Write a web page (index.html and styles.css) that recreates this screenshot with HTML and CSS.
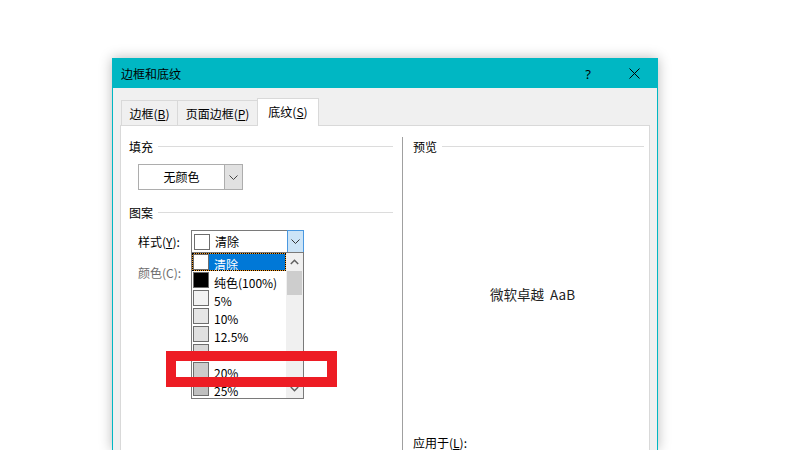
FILE: index.html
```html
<!DOCTYPE html>
<html lang="zh-CN">
<head>
<meta charset="utf-8">
<title>边框和底纹</title>
<link rel="stylesheet" href="styles.css">
</head>
<body>
<div class="desk">
  <div class="window">
    <div class="titlebar">
      <span class="title">边框和底纹</span>
      <span class="tbtn help">?</span>
      <span class="tbtn close">
        <svg width="11" height="11" viewBox="0 0 11 11"><path d="M0.5 0.5 L10.5 10.5 M10.5 0.5 L0.5 10.5" stroke="#000" stroke-width="1" fill="none"/></svg>
      </span>
    </div>
    <div class="body">
      <div class="tabs">
        <div class="tab t1">边框(<u>B</u>)</div>
        <div class="tab t2">页面边框(<u>P</u>)</div>
        <div class="tab t3 active">底纹(<u>S</u>)</div>
      </div>
      <div class="panel">
        <div class="left">
          <div class="group-head"><span>填充</span><i class="rule"></i></div>
          <div class="fill-dd">
            <span class="val">无颜色</span>
            <span class="btn"><svg width="9" height="5" viewBox="0 0 9 5"><polyline points="0.5,0.5 4.5,4.5 8.5,0.5" stroke="#444" fill="none"/></svg></span>
          </div>
          <div class="group-head pattern"><span>图案</span><i class="rule"></i></div>
          <div class="field style-row">
            <span class="lbl">样式(<u>Y</u>):</span>
            <div class="combo">
              <span class="sw sw-clear"></span>
              <span class="combo-val">清除</span>
              <span class="combo-btn"><svg width="9" height="5" viewBox="0 0 9 5"><polyline points="0.5,0.5 4.5,4.5 8.5,0.5" stroke="#333" fill="none"/></svg></span>
              <div class="list">
                <div class="items">
                  <div class="item selected"><span class="sw sw-clear"></span><span class="txt">清除</span></div>
                  <div class="item"><span class="sw sw-solid"></span><span class="txt">纯色(100%)</span></div>
                  <div class="item"><span class="sw sw-5"></span><span class="txt">5%</span></div>
                  <div class="item"><span class="sw sw-10"></span><span class="txt">10%</span></div>
                  <div class="item"><span class="sw sw-125"></span><span class="txt">12.5%</span></div>
                  <div class="item"><span class="sw sw-15"></span><span class="txt">15%</span></div>
                  <div class="item"><span class="sw sw-20"></span><span class="txt">20%</span></div>
                  <div class="item"><span class="sw sw-25"></span><span class="txt">25%</span></div>
                </div>
                <div class="scroll">
                  <span class="arrow"><svg width="9" height="6" viewBox="0 0 9 6"><polyline points="0.8,5 4.5,1.3 8.2,5" stroke="#606060" stroke-width="1.5" fill="none"/></svg></span>
                  <span class="thumb"></span>
                  <span class="track"></span>
                  <span class="arrow"><svg width="9" height="6" viewBox="0 0 9 6"><polyline points="0.8,1 4.5,4.7 8.2,1" stroke="#606060" stroke-width="1.5" fill="none"/></svg></span>
                </div>
              </div>
            </div>
          </div>
          <div class="field color-row">
            <span class="lbl disabled">颜色(C):</span>
          </div>
        </div>
        <div class="right">
          <div class="group-head"><span>预览</span><i class="rule"></i></div>
          <div class="preview"><span>微软卓越&nbsp;&nbsp;AaB</span></div>
          <div class="apply">应用于(<u>L</u>):</div>
        </div>
      </div>
    </div>
  </div>
  <div class="mark"></div>
</div>
</body>
</html>
```

FILE: styles.css
```css
html, body {
  margin: 0;
  height: 450px;
  overflow: hidden;
  background: #fff;
}
body {
  font-family: "Noto Sans CJK SC", "Noto Sans", sans-serif;
  font-size: 12px;
  color: #000;
}
u {
  text-decoration: underline;
  text-underline-offset: 1px;
}
.desk {
  position: relative;
  height: 450px;
  box-sizing: border-box;
  padding: 58px 0 0 112px;
  overflow: hidden;
}
.window {
  width: 546px;
  height: 392px;
  box-sizing: border-box;
  border: 1px solid #00b7c3;
  border-bottom: 0;
  background: #f0f0f0;
  box-shadow: 0 0 12px rgba(0, 0, 0, 0.28);
  display: flex;
  flex-direction: column;
}
.titlebar {
  height: 29px;
  background: #00b7c3;
  display: flex;
  align-items: center;
  padding-left: 8px;
}
.title {
  flex: 1;
  line-height: 29px;
}
.tbtn {
  width: 46px;
  height: 29px;
  display: flex;
  align-items: center;
  justify-content: center;
}
.help {
  font-family: "Noto Sans", sans-serif;
  font-size: 13px;
}
.body {
  flex: 1;
  display: flex;
  flex-direction: column;
  padding: 10px 7px 0;
  min-height: 0;
}
.tabs {
  display: flex;
  align-items: flex-end;
  height: 27px;
  padding-left: 1px;
  position: relative;
  z-index: 1;
}
.tab {
  height: 25px;
  box-sizing: border-box;
  border: 1px solid #d9d9d9;
  border-bottom: 0;
  display: flex;
  align-items: center;
  justify-content: center;
}
.tab + .tab { margin-left: -1px; }
.t1 { width: 57px; }
.t2 { width: 81px; }
.t3 { width: 62px; }
.tab.active {
  height: 28px;
  margin-bottom: -1px;
  background: #fff;
  padding-bottom: 2px;
}
.panel {
  flex: 1;
  min-height: 0;
  display: flex;
  background: #fff;
  border: 1px solid #d9d9d9;
  border-bottom: 0;
}
.left {
  width: 281px;
  box-sizing: border-box;
  padding: 12px 9px 0 8px;
}
.group-head {
  display: flex;
  align-items: center;
  gap: 5px;
  height: 16px;
}
.rule {
  flex: 1;
  height: 1px;
  background: #dcdcdc;
}
.fill-dd {
  margin: 10px 0 0 9px;
  width: 105px;
  height: 26px;
  box-sizing: border-box;
  border: 1px solid #adadad;
  display: flex;
}
.fill-dd .val {
  flex: 1;
  text-align: center;
  line-height: 24px;
}
.fill-dd .btn {
  width: 17px;
  background: #e1e1e1;
  border-left: 1px solid #adadad;
  display: flex;
  align-items: center;
  justify-content: center;
}
.group-head.pattern { margin-top: 14px; }
.field {
  display: flex;
  align-items: center;
  padding-left: 9px;
}
.style-row { margin-top: 10px; }
.color-row { margin-top: 10px; height: 18px; }
.lbl { width: 53px; }
.lbl.disabled { color: #6d6d6d; }
.combo {
  position: relative;
  width: 113px;
  height: 23px;
  box-sizing: border-box;
  border: 1px solid #7a7a7a;
  display: flex;
  align-items: center;
  padding-left: 2px;
}
.combo-val {
  flex: 1;
  margin-left: 5px;
}
.combo-btn {
  align-self: stretch;
  width: 17px;
  margin: -1px -1px -1px 0;
  box-sizing: border-box;
  border: 1px solid #4a98e0;
  background: #cce4f7;
  display: flex;
  align-items: center;
  justify-content: center;
}
.sw {
  width: 16px;
  height: 16px;
  box-sizing: border-box;
  border: 1px solid #6d6d6d;
  flex: none;
}
.sw-clear { background: #fff; }
.sw-solid { background: #000; }
.sw-5 { background: #f2f2f2; }
.sw-10 { background: #e6e6e6; }
.sw-125 { background: #e0e0e0; }
.sw-15 { background: #d9d9d9; }
.sw-20 { background: #cccccc; }
.sw-25 { background: #bfbfbf; }
.list {
  position: absolute;
  top: 100%;
  left: -1px;
  width: 113px;
  height: 147px;
  box-sizing: border-box;
  border: 1px solid #7a7a7a;
  background: #fff;
  display: flex;
  z-index: 2;
}
.items {
  flex: 1;
  overflow: hidden;
}
.item {
  height: 18px;
  box-sizing: border-box;
  display: flex;
  align-items: center;
  padding-left: 1px;
}
.item .txt {
  margin-left: 5px;
  align-self: flex-start;
  line-height: 13px;
  padding-top: 5px;
}
.item.selected {
  background: #0078d7;
  color: #fff;
  box-shadow: inset 0 0 0 1px #f59a23;
  outline: 1px dotted #000;
  outline-offset: -1px;
}
.scroll {
  width: 17px;
  background: #f0f0f0;
  display: flex;
  flex-direction: column;
  align-items: center;
}
.arrow {
  height: 18px;
  width: 17px;
  display: flex;
  align-items: center;
  justify-content: center;
}
.thumb {
  width: 15px;
  height: 24px;
  background: #cdcdcd;
}
.track { flex: 1; }
.right {
  flex: 1;
  margin-top: 11px;
  border-left: 1px solid #a0a0a0;
  padding: 1px 5px 0 10px;
}
.preview {
  height: 280px;
  display: flex;
  align-items: center;
  justify-content: center;
  padding-left: 8px;
  font-size: 13.5px;
  color: #222;
}
.apply {
  line-height: 16px;
  padding-top: 1px;
}
.mark {
  position: absolute;
  left: 166px;
  top: 351px;
  width: 171px;
  height: 36px;
  box-sizing: border-box;
  border: 10px solid #ed1c24;
  z-index: 5;
}
```
